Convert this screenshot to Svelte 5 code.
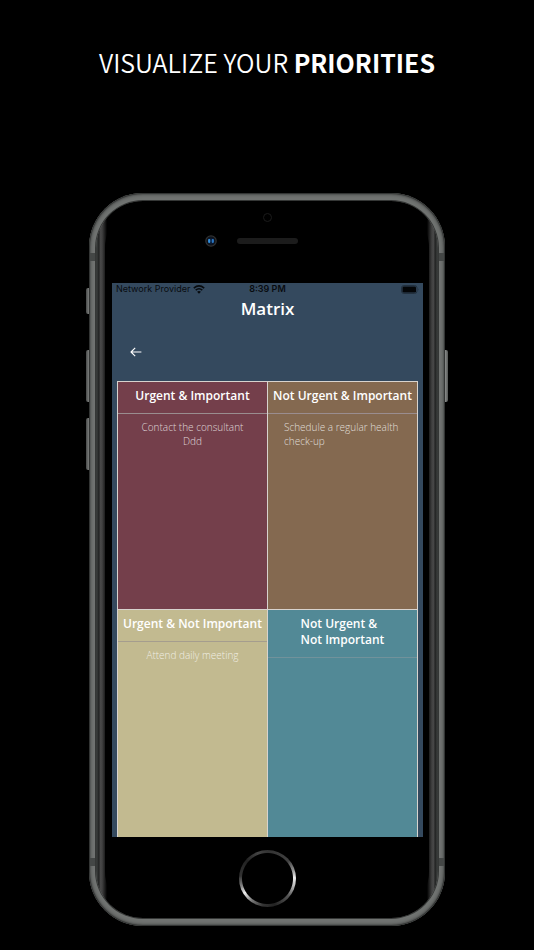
<script>
  const quadrants = [
    { title: ['Urgent & Important'], tone: 'wine', tasks: ['Contact the consultant', 'Ddd'] },
    { title: ['Not Urgent & Important'], tone: 'brown', tasks: ['Schedule a regular health check-up'] },
    { title: ['Urgent & Not Important'], tone: 'sand', tasks: ['Attend daily meeting'] },
    { title: ['Not Urgent &', 'Not Important'], tone: 'teal', tasks: [] }
  ];
</script>

<main>
  <h1>VISUALIZE YOUR <strong>PRIORITIES</strong></h1>

  <div class="phone">
    <span class="key mute"></span>
    <span class="key up"></span>
    <span class="key down"></span>
    <span class="key power"></span>
    <span class="band top"></span>
    <span class="band bottom"></span>
    <div class="rim">
      <div class="face">
        <div class="sensor"></div>
        <div class="earpiece">
          <svg class="camera" viewBox="0 0 12 12" aria-hidden="true">
            <circle cx="6" cy="6" r="5.2" fill="#101215" stroke="#303234" stroke-width="1.2" />
            <circle cx="6" cy="6" r="3.4" fill="#0a1830" />
            <rect x="3.1" y="4.1" width="2.2" height="3.8" rx="0.8" fill="#3390dc" />
            <rect x="6.7" y="4.1" width="2.2" height="3.8" rx="0.8" fill="#2a76c2" />
          </svg>
          <span class="speaker"></span>
        </div>

        <section class="screen">
          <div class="status">
            <span class="carrier">
              Network Provider
              <svg width="12" height="9" viewBox="0 0 12 9" aria-hidden="true">
                <path d="M0.8 3.2Q6-1.3 11.2 3.2M2.7 5.2Q6 2.3 9.3 5.2" fill="none" stroke="#070a0d" stroke-width="1.6" />
                <path d="M4.1 6.7Q6 5.1 7.9 6.7L6 8.7Z" fill="#070a0d" />
              </svg>
            </span>
            <b>8:39 PM</b>
            <svg class="battery" width="18" height="9" viewBox="0 0 18 9" aria-hidden="true">
              <rect x="0.5" y="0.5" width="15.5" height="8" rx="2.4" fill="none" stroke="#22303e" />
              <rect x="1.5" y="1.5" width="13.5" height="6" rx="1.3" fill="#030507" />
              <path d="M17 3.2Q18 4.5 17 5.8Z" fill="#22303e" />
            </svg>
          </div>
          <h2>Matrix</h2>
          <button class="back" aria-label="Back">
            <svg width="12" height="10" viewBox="0 0 12 10" aria-hidden="true">
              <path d="M11.4 5H1M5.2 0.8L1 5L5.2 9.2" fill="none" stroke="#fff" stroke-width="1.1" stroke-linejoin="round" />
            </svg>
          </button>
          <div class="matrix">
            {#each quadrants as q}
              <article class={q.tone}>
                <header>
                  <h3>{#each q.title as line}<span>{line}</span>{/each}</h3>
                </header>
                <ul>
                  {#each q.tasks as task}<li>{task}</li>{/each}
                </ul>
              </article>
            {/each}
          </div>
        </section>

        <button class="home" aria-label="Home"></button>
      </div>
    </div>
  </div>
</main>

<style>
  :global(body) {
    background: #000;
  }
  main {
    min-height: 100vh;
    box-sizing: border-box;
    padding: 42px 0 24px;
    background: #000;
    color: #fff;
    font-family: 'Open Sans', 'Noto Sans', sans-serif;
  }
  h1 {
    margin: 0 0 111px;
    text-align: center;
    font: 350 25px/40px 'Noto Sans CJK SC', 'Noto Sans', sans-serif;
  }
  h1 strong {
    font-weight: 700;
  }
  .phone {
    position: relative;
    box-sizing: border-box;
    width: 66.67%;
    min-width: 340px;
    margin: 0 auto;
    padding: 8px 7px;
    border-radius: 54px;
    background: #707371;
    box-shadow: inset 0 0 1px 1px #303231, inset 0 0 3px 2px #505251;
  }
  .rim {
    padding: 1px 9px;
    border-radius: 47px;
    background: linear-gradient(90deg, #3a3d3c, #303231 2px, #1c1d1d 3px, #484848 4px, #424242 6px, #1c1c1c 9px, #000 11px, #000 calc(100% - 11px), #1c1c1c calc(100% - 9px), #424242 calc(100% - 6px), #484848 calc(100% - 4px), #1c1d1d calc(100% - 3px), #303231 calc(100% - 2px), #3a3d3c);
    box-shadow: 0 0 0 1px #353736;
  }
  .face {
    display: flex;
    flex-direction: column;
    padding: 11px 6px 10px 7px;
    border-radius: 46px;
    background: #000;
  }
  .key {
    position: absolute;
    left: -3px;
    width: 3px;
    height: 52px;
    border-radius: 2px 0 0 2px;
    background: linear-gradient(90deg, #484a49, #7c7e7d);
  }
  .mute {
    top: 95px;
    height: 26px;
  }
  .up {
    top: 157px;
  }
  .down {
    top: 225px;
  }
  .power {
    top: 157px;
    right: -3px;
    left: auto;
    border-radius: 0 2px 2px 0;
    background: linear-gradient(90deg, #8c8e8d, #545655);
  }
  .band {
    position: absolute;
    left: 1px;
    right: 1px;
    height: 8px;
    border: solid #444746;
    border-width: 0 5px;
  }
  .band.top {
    top: 60px;
  }
  .band.bottom {
    bottom: 60px;
  }
  .sensor {
    align-self: center;
    box-sizing: border-box;
    width: 9px;
    height: 9px;
    border: 1px solid #1b1b1b;
    border-radius: 50%;
  }
  .earpiece {
    display: grid;
    grid-template-columns: 1fr 61px 1fr;
    align-items: center;
    margin: 13px 0 36px;
  }
  .camera {
    justify-self: end;
    width: 12px;
    height: 12px;
    margin-right: 20px;
  }
  .speaker {
    height: 6px;
    border-radius: 3px;
    background: #1c1c1c;
  }
  .screen {
    display: flex;
    flex-direction: column;
    height: 554px;
    overflow: hidden;
    background: #34495e;
  }
  .status {
    display: grid;
    grid-template-columns: 1fr auto 1fr;
    align-items: center;
    flex: none;
    height: 12px;
    padding: 0 4px;
    color: #080b0f;
    font: 9px/12px Inter, 'Liberation Sans', sans-serif;
  }
  .carrier {
    display: flex;
    align-items: center;
    gap: 3px;
    white-space: nowrap;
  }
  .status b {
    font-weight: 600;
  }
  .battery {
    justify-self: end;
  }
  h2 {
    margin: 2px 0 0;
    text-align: center;
    font-size: 17px;
    font-weight: 600;
    line-height: 24px;
  }
  .back {
    display: flex;
    align-items: center;
    justify-content: center;
    flex: none;
    align-self: flex-start;
    width: 32px;
    height: 32px;
    margin: 15px 0 13px 8px;
    padding: 0;
    border: 0;
    background: none;
  }
  .matrix {
    display: grid;
    grid-template-columns: 1fr 1fr;
    grid-auto-rows: 227px;
    gap: 1px;
    flex: none;
    margin: 0 5px;
    padding: 1px;
    background: #d8d3ce;
  }
  .wine { background: #743f4b; }
  .brown { background: #846950; }
  .sand { background: #c2ba90; }
  .teal { background: #528996; }
  header {
    padding: 6px 0 9px;
    border-bottom: 1px solid #9a8d8f;
  }
  .sand header {
    border-color: #a59d8e;
  }
  .teal header {
    border-color: #71929b;
  }
  h3 {
    width: fit-content;
    margin: 0 auto;
    font-size: 12px;
    font-weight: 600;
    line-height: 16px;
    white-space: nowrap;
  }
  h3 span {
    display: block;
  }
  ul {
    margin: 0;
    padding: 6px 16px;
    list-style: none;
  }
  li {
    width: fit-content;
    margin: 0 auto;
    color: rgba(255, 255, 255, 0.78);
    font-size: 10px;
    font-weight: 300;
    line-height: 14px;
  }
  .home {
    align-self: center;
    width: 57px;
    height: 57px;
    margin-top: 13px;
    padding: 0;
    border: 0;
    border-radius: 50%;
    background:
      radial-gradient(circle, #000 25px, transparent 26px),
      conic-gradient(#333, #404040 50deg, #888 70deg, #eee 88deg, #bbb 105deg, #555 130deg, #222 165deg, #333 190deg, #777 215deg, #eee 238deg, #888 253deg, #333 275deg, #222 310deg, #444 340deg, #333);
  }
</style>
